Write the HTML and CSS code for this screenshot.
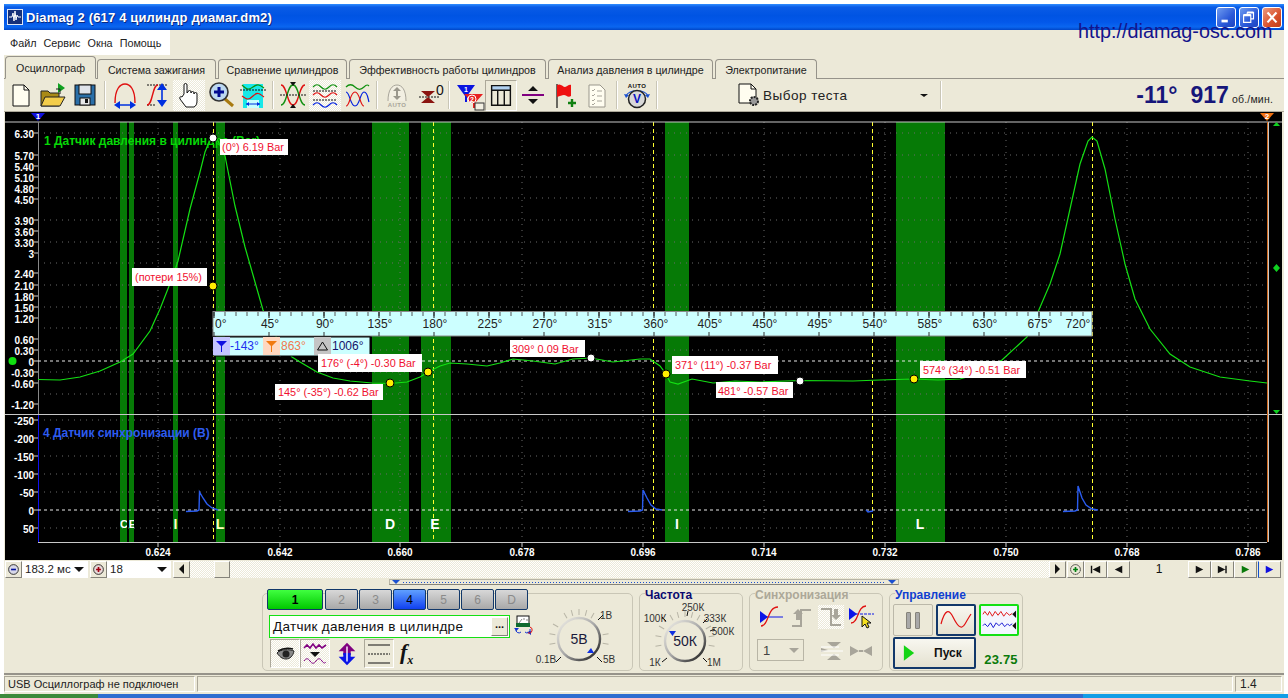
FILE: index.html
```html
<!DOCTYPE html>
<html lang="ru">
<head>
<meta charset="utf-8">
<title>Diamag 2</title>
<link rel="stylesheet" href="styles.css">
</head>
<body>
<div class="window">
  <header class="titlebar">
    <svg class="app-icon" viewBox="0 0 16 16"><rect width="16" height="16" fill="#16307a"/><rect x=".5" y=".5" width="15" height="15" fill="none" stroke="#dfe6f5"/><path d="M2 8h3l1-4 1 8 1-10 1 9 1-5 1 2h3" fill="none" stroke="#fff"/></svg>
    <span class="title-text">Diamag 2 (617 4 цилиндр диамаг.dm2)</span>
    <div class="winbtns">
      <span class="winbtn"><svg viewBox="0 0 20 21"><rect x="5" y="13" width="7" height="3" fill="#fff"/></svg></span>
      <span class="winbtn"><svg viewBox="0 0 20 21"><path d="M8 5h7v7h-3M8 5v2M4 8h8v8H4z" fill="none" stroke="#fff" stroke-width="1.3"/><path d="M4 8h8M8 5h7" stroke="#fff" stroke-width="2.4"/></svg></span>
      <span class="winbtn winbtn-close"><svg viewBox="0 0 20 21"><path d="M5 5l10 11M15 5L5 16" stroke="#fff" stroke-width="2.4"/></svg></span>
    </div>
  </header>
  <a class="url">http://diamag-osc.com</a>
  <nav class="menubar"><span>Файл</span><span>Сервис</span><span>Окна</span><span>Помощь</span></nav>
  <div class="tabs">
    <span class="tab tab-active w-osc">Осциллограф</span>
    <span class="tab w-ign">Система зажигания</span>
    <span class="tab w-cmp">Сравнение цилиндров</span>
    <span class="tab w-eff">Эффективность работы цилиндров</span>
    <span class="tab w-ana">Анализ давления в цилиндре</span>
    <span class="tab w-pow">Электропитание</span>
  </div>
  <div class="toolbar">
    <span class="tb"><svg viewBox="0 0 32 32"><path d="M8 6h11l5 5v16H8z" fill="#fffdf0" stroke="#111"/><path d="M19 6v5h5" fill="none" stroke="#111"/></svg></span>
    <span class="tb"><svg viewBox="0 0 32 32"><path d="M21 4l7 5-7 5z" fill="#10a020"/><path d="M19 10h4v5" fill="none" stroke="#222"/><path d="M4 12h7l2 2h9v13H4z" fill="#a98a16" stroke="#222"/><path d="M4 27l4-9h20l-5 9z" fill="#f3cd4a" stroke="#222"/></svg></span>
    <span class="tb"><svg viewBox="0 0 32 32"><rect x="6" y="6" width="20" height="20" fill="#2a6fa8" stroke="#111"/><rect x="10" y="6" width="12" height="9" fill="#dfe3ea" stroke="#111"/><rect x="11" y="19" width="10" height="7" fill="#e7e7e7" stroke="#111"/><rect x="16" y="20" width="3" height="4" fill="#111"/></svg></span>
    <span class="sep"></span>
    <span class="tb"><svg viewBox="0 0 32 32"><path d="M6 24C6 10 11 5 16 5s10 5 10 19" fill="none" stroke="#e01010" stroke-width="1.4"/><path d="M9 26h14" stroke="#0030e0" stroke-width="1.5"/><path d="M5 26l6-4v8zM27 26l-6-4v8z" fill="#0030e0"/></svg></span>
    <span class="tb"><svg viewBox="0 0 32 32"><path d="M6 6h20M6 26h8" stroke="#111" stroke-dasharray="2 1"/><path d="M6 26c6 0 5-20 11-20" fill="none" stroke="#e01010" stroke-width="1.4"/><path d="M21 10v14" stroke="#0030e0" stroke-width="1.6"/><path d="M21 4l5 7H16zM21 28l5-7H16z" fill="#0030e0"/></svg></span>
    <span class="tb tb-on"><svg viewBox="0 0 32 32"><path d="M11 15V6a1.500 1.500 0 0 1 3 0v8l1-1a1.500 1.500 0 0 1 3 0v1a1.500 1.500 0 0 1 3 0v1a1.500 1.500 0 0 1 3 0v7c0 3-1 5-3 6h-8l-6-8c-1-2 1-3 2-2z" fill="#fff" stroke="#111"/></svg></span>
    <span class="tb"><svg viewBox="0 0 32 32"><path d="M20 20l8 7" stroke="#a87a10" stroke-width="3"/><circle cx="14" cy="13" r="9" fill="#bcd8f0" stroke="#333" stroke-width="1.6"/><path d="M9 13h10M14 8v10" stroke="#000a90" stroke-width="3"/></svg></span>
    <span class="tb"><svg viewBox="0 0 32 32"><path d="M6 5h20v24H6z" fill="#18e8e8"/><rect x="10" y="21" width="12" height="8" fill="#c8ffff"/><path d="M5 6c5 5 7 5 11 2s6-3 11 1" fill="none" stroke="#109010" stroke-width="1.2"/><path d="M5 17c5 4 7 4 11 0s6-3 11 1" fill="none" stroke="#e01010" stroke-width="1.2"/><path d="M3 11h26" stroke="#111" stroke-dasharray="2 1"/><path d="M9 25h14" stroke="#0030e0"/><path d="M9 25l3-2v4zM23 25l-3-2v4z" fill="#0030e0"/></svg></span>
    <span class="sep"></span>
    <span class="tb"><svg viewBox="0 0 32 32"><path d="M4 6c6 0 6 20 12 20s6-20 12-20" fill="none" stroke="#e01010" stroke-width="1.3"/><path d="M4 26c6 0 6-20 12-20s6 20 12 20" fill="none" stroke="#109010" stroke-width="1.3"/><path d="M3 16h26" stroke="#111" stroke-dasharray="2 1"/><path d="M13 3h6l-3 4zM13 29h6l-3-4z" fill="#111"/></svg></span>
    <span class="tb tb-on"><svg viewBox="0 0 32 32"><path d="M4 8c3-3 5-3 8 0s5 3 8 0 5-3 8 0" fill="none" stroke="#109010" stroke-width="1.2"/><path d="M4 16c3-3 5-3 8 0s5 3 8 0 5-3 8 0" fill="none" stroke="#e01010" stroke-width="1.2"/><path d="M4 26c3-3 5-3 8 0s5 3 8 0 5-3 8 0" fill="none" stroke="#0020e0" stroke-width="1.2"/><path d="M4 12h24M4 21h24" stroke="#111" stroke-dasharray="2 1"/></svg></span>
    <span class="tb"><svg viewBox="0 0 32 32"><path d="M5 8c3-3 6-3 9 0s6 3 9 0 4-2 5-1" fill="none" stroke="#109010" stroke-width="1.2"/><path d="M5 13c4 0 4 14 9 14s5-14 9-14 4 8 5 10" fill="none" stroke="#0020e0" stroke-width="1.2"/><path d="M5 27c4 0 4-14 9-14s5 14 9 14" fill="none" stroke="#e01010" stroke-width="1.2"/></svg></span>
    <span class="sep"></span>
    <span class="tb"><svg viewBox="0 0 32 32"><path d="M7 22C7 11 11 6 16 6s9 5 9 16" fill="#f2efe2" stroke="#a8a59a"/><path d="M16 10v9" stroke="#9a978c" stroke-width="2"/><path d="M12 12l4-4 4 4zM12 17l4 4 4-4z" fill="#9a978c"/><text class="auto-dis" x="16" y="28">AUTO</text></svg></span>
    <span class="tb"><svg viewBox="0 0 32 32"><path d="M8 12h14l-7 6zM8 24h14l-7-6z" fill="#8a1410"/><text class="zero-tx" x="23" y="16">0</text><path d="M6 18h20" stroke="#111" stroke-dasharray="2 1"/></svg></span>
    <span class="sep"></span>
    <span class="tb"><svg viewBox="0 0 32 32"><path d="M4 6h18l-8 11v6h-2V17z" fill="#0a14e0"/><text class="flt" x="13" y="13">1</text><path d="M11 15h19l-8 9v5h-2v-5z" fill="#e82020"/><circle cx="19" cy="20" r="4" fill="#e82020" stroke="#fff"/><text class="flt" x="19" y="23">2</text><rect x="22" y="24" width="9" height="7" fill="#f2efe2" stroke="#333"/></svg></span>
    <span class="tb tb-on tb-tab"><svg viewBox="0 0 32 32"><rect x="6" y="6" width="20" height="5" fill="#b0d0f0"/><path d="M6 6h20v21H6zM6 11h20M12.500 11v16M19.500 11v16" fill="none" stroke="#111" stroke-width="1.5"/></svg></span>
    <span class="tb"><svg viewBox="0 0 32 32"><path d="M5 16h22" stroke="#800080" stroke-width="2"/><path d="M16 7l5 5H11zM16 25l5-5H11z" fill="#111"/></svg></span>
    <span class="tb"><svg viewBox="0 0 32 32"><path d="M8 5v24" stroke="#111" stroke-width="1.2"/><path d="M8 6c4-2 6 2 8 2s4-3 6-2v11c-3 2-5-1-7-1s-4 1-7 2z" fill="#ef1010"/><path d="M19 24h8M23 20v8" stroke="#108010" stroke-width="2.4"/></svg></span>
    <span class="tb"><svg viewBox="0 0 32 32"><path d="M8 6h11l5 5v17H8z" fill="#fffdf0" stroke="#9a978c"/><path d="M11 11l1 1 2-2M11 16l1 1 2-2M11 21l1 1 2-2M11 25l1 1 2-2M16 12h5M16 17h5M16 22h5" fill="none" stroke="#a8a59a"/></svg></span>
    <span class="sep"></span>
    <span class="tb"><svg viewBox="0 0 32 32"><text class="auto-on" x="16" y="9">AUTO</text><path d="M5 17c3-7 19-7 22 0" fill="none" stroke="#1a50d0" stroke-width="1.2"/><path d="M3 15l5 1-3 3zM29 15l-5 1 3 3z" fill="#1a50d0"/><circle cx="16" cy="20" r="8.500" fill="#d8d8d8" stroke="#222" stroke-width="1.5"/><text class="v-tx" x="16" y="24">V</text></svg></span>
    <span class="sep"></span>
    <div class="test-select">
      <svg class="test-icon" viewBox="0 0 24 24"><path d="M2 1h12l5 5v14H2z" fill="#fffdf0" stroke="#111"/><path d="M14 1v5h5" fill="none" stroke="#111"/><circle cx="17" cy="18" r="4" fill="#999" stroke="#222" stroke-width="2" stroke-dasharray="2 1"/></svg>
      <span class="test-text">Выбор теста</span>
      <i class="arrow arrow-small"></i>
    </div>
    <span class="sep"></span>
    <div class="rpm"><b class="rpm-big">-11°</b><b class="rpm-big rpm-val">917</b><span class="rpm-unit">об./мин.</span></div>
  </div>

  <svg class="chart" viewBox="5 113 1277 448">
    <defs>
      <clipPath id="b1"><rect x="120" y="500" width="7" height="40"/></clipPath>
      <clipPath id="b2"><rect x="129" y="500" width="5" height="40"/></clipPath>
    </defs>
    <rect x="5" y="113" width="1277" height="448" fill="#000"/>
    <g class="bands">
      <rect x="120" y="123" width="7" height="420"/><rect x="129" y="123" width="5" height="420"/>
      <rect x="173" y="123" width="5" height="420"/><rect x="216" y="123" width="9" height="420"/>
      <rect x="372" y="123" width="37" height="420"/><rect x="421" y="123" width="30" height="420"/>
      <rect x="665" y="123" width="24" height="420"/><rect x="896" y="123" width="49" height="420"/>
    </g>
    <path class="grid" d="M38 134H1267M38 156H1267M38 178H1267M38 199H1267M38 221H1267M38 243H1267M38 264H1267M38 286H1267M38 308H1267M38 329H1267M38 351H1267M38 373H1267M38 395H1267M38 421H1267M38 439H1267M38 457H1267M38 475H1267M38 493H1267M38 529H1267M158 123V543M280 123V543M400 123V543M522 123V543M643 123V543M764 123V543M885 123V543M1006 123V543M1127 123V543M1248 123V543"/>
    <path class="cursor" d="M213.500 123V543M433.500 123V543M653.500 123V543M872.500 123V543M1092.500 123V543"/>
    <path class="frame" d="M5 123H1282M5 415.500H1282M38 543.500H1267M1268.500 123V543"/>
    <path class="axis-up" d="M38.500 123V415"/>
    <path class="axis-lo" d="M38.500 416V543"/>
    <path class="axis-end" d="M1267.500 123V543"/>
    <path class="ticks" d="M34 134h4M34 156h4M34 167h4M34 178h4M34 189h4M34 200h4M34 221h4M34 232h4M34 243h4M34 254h4M34 274h4M34 286h4M34 297h4M34 308h4M34 319h4M34 340h4M34 351h4M34 362h4M34 373h4M34 384h4M34 405h4M34 421h4M34 439h4M34 457h4M34 475h4M34 493h4M34 511h4M34 529h4M158 544v4M280 544v4M400 544v4M522 544v4M643 544v4M764 544v4M885 544v4M1006 544v4M1127 544v4M1248 544v4"/>
    <path class="zero" d="M38 362H1267M38 511H1267"/>
    <path class="wave-blue" d="M186 512.500L197 512L199 511L199.500 493L203 499L207 505L212 509L218 511M628 512.500L640 512L642.500 511L643 491L647 499L651 506L656 510L662 511M866 511L868 513L873 512M1063 512.500L1075 512L1077.500 511L1078 487L1082 499L1086 506L1092 510L1098 511"/>
    <path class="wave-green" d="M38 380.500L60 381L80 378L100 372L120 363L133 355L150 332L160 310L173 277L178 262L190 210L200 173L205 153L210 141L213 139L218 142L225 157L235 207L245 248L255 283L263 311L275 336L292 358L300 363L317 373L333 379L350 382L372 384L390 384.500L407 383L420 378L428 373L440 367L450 364L467 365L487 367L500 364L513 360L533 362L555 365L573 360L591 359L613 363L640 360L650 360L660 367L666 375L670 383L678 385L692 380L713 384L735 382L760 383L800 381.500L853 382L880 381L913 380L938 381L960 380L985 373L1002 361L1027 338L1041 306L1050 285L1060 255L1070 210L1080 165L1088 142L1092 138L1097 142L1105 170L1115 220L1125 265L1135 300L1150 330L1170 355L1190 368L1220 378L1250 382L1267 384"/>
    <g class="ylab">
      <text x="34" y="138">6.30</text><text x="34" y="160">5.70</text><text x="34" y="171">5.40</text><text x="34" y="182">5.10</text><text x="34" y="193">4.80</text><text x="34" y="204">4.50</text>
      <text x="34" y="225">3.90</text><text x="34" y="236">3.60</text><text x="34" y="247">3.30</text><text x="34" y="258">3</text>
      <text x="34" y="278">2.40</text><text x="34" y="290">2.10</text><text x="34" y="301">1.80</text><text x="34" y="312">1.50</text><text x="34" y="323">1.20</text>
      <text x="34" y="344">0.60</text><text x="34" y="355">0.30</text><text x="34" y="366">0</text><text x="34" y="377">-0.30</text><text x="34" y="388">-0.60</text><text x="34" y="409">-1.20</text>
      <text x="34" y="425">-250</text><text x="34" y="443">-200</text><text x="34" y="461">-150</text><text x="34" y="479">-100</text><text x="34" y="497">-50</text><text x="34" y="515">0</text><text x="34" y="533">50</text>
    </g>
    <g class="xlab">
      <text x="158" y="557">0.624</text><text x="280" y="557">0.642</text><text x="400" y="557">0.660</text><text x="522" y="557">0.678</text><text x="643" y="557">0.696</text><text x="764" y="557">0.714</text><text x="885" y="557">0.732</text><text x="1006" y="557">0.750</text><text x="1127" y="557">0.768</text><text x="1248" y="557">0.786</text>
    </g>
    <text class="ch-green" x="44" y="146">1 Датчик давления в цилиндре (Bar)</text>
    <text class="ch-blue" x="43" y="438">4 Датчик синхронизации (В)</text>
    <g class="phase">
      <text class="phase-xs" clip-path="url(#b1)" x="124" y="529">C</text><text class="phase-xs" clip-path="url(#b2)" x="132.500" y="529">E</text>
      <text class="phase-sm" x="175.500" y="530">I</text><text class="phase-sm" x="220" y="530">L</text>
      <text x="390" y="530">D</text><text x="435" y="530">E</text><text x="677" y="530">I</text><text x="920" y="530">L</text>
    </g>
    <path class="mark-blue" d="M31 114h14l-7 8z"/><text class="mark-tx" x="38" y="120">1</text>
    <path class="mark-or" d="M1260 114h14l-7 8z"/><text class="mark-tx" x="1267" y="120">2</text>
    <path class="mark-g" d="M1273 127h7l-3.500 -4zM1276.500 265l3.500 4-3.500 4-3.500-4zM1273 411h7l-3.500 4z"/>
    <circle class="mark-c" cx="12.500" cy="362" r="4"/>

    <rect class="ruler" x="213" y="312.500" width="879" height="24.500"/>
    <path class="r-t" d="M213.500 315H1092"/>
    <path class="r-m" d="M213.500 316H1092"/>
    <path class="r-b" d="M213.500 335H1092"/>
    <g class="r-lab">
      <text class="r-first" x="215" y="329">0°</text><text x="270" y="329">45°</text><text x="325" y="329">90°</text><text x="380" y="329">135°</text><text x="435" y="329">180°</text><text x="490" y="329">225°</text><text x="545" y="329">270°</text><text x="600" y="329">315°</text><text x="656" y="329">360°</text><text x="710" y="329">405°</text><text x="765" y="329">450°</text><text x="820" y="329">495°</text><text x="875" y="329">540°</text><text x="930" y="329">585°</text><text x="985" y="329">630°</text><text x="1040" y="329">675°</text><text x="1078" y="329">720°</text>
    </g>
    <rect class="lg-bg" x="213" y="338" width="157" height="19"/>
    <rect class="lg-c1" x="213" y="338" width="17" height="18"/><rect class="lg-c2" x="263" y="338" width="17" height="18"/><rect class="lg-c3" x="314" y="338" width="17" height="18"/>
    <path class="lg-blue" d="M216 342h11l-5 5v6h-1v-6z"/><path class="lg-or" d="M266 342h11l-5 5v6h-1v-6z"/><path class="lg-tri" d="M322.500 343l5 8h-10z"/>
    <text class="lg-t1" x="230" y="351">-143°</text><text class="lg-t2" x="281" y="351">863°</text><text class="lg-t3" x="332" y="351">1006°</text>

    <g class="lbl">
      <rect x="220" y="140" width="68" height="16"/><text x="222" y="152">(0°) 6.19 Bar</text>
      <rect x="132" y="269" width="75" height="18"/><text x="135" y="282">(потери 15%)</text>
      <rect x="275" y="385" width="108" height="16"/><text x="278" y="397">145° (-35°) -0.62 Bar</text>
      <rect x="318" y="355" width="104" height="18"/><text x="321" y="368">176° (-4°) -0.30 Bar</text>
      <rect x="510" y="341" width="75" height="17"/><text x="512" y="354">309° 0.09 Bar</text>
      <rect x="672" y="357" width="106" height="18"/><text x="675" y="370">371° (11°) -0.37 Bar</text>
      <rect x="716" y="383" width="77" height="16"/><text x="718" y="396">481° -0.57 Bar</text>
      <rect x="920" y="362" width="106" height="17"/><text x="923" y="375">574° (34°) -0.51 Bar</text>
    </g>
    <g class="dot-w"><circle cx="213" cy="139" r="4"/><circle cx="591" cy="359" r="4"/><circle cx="800" cy="382" r="4"/></g>
    <g class="dot-y"><circle cx="213" cy="287" r="4"/><circle cx="390" cy="384" r="4"/><circle cx="428" cy="373" r="4"/><circle cx="666" cy="375" r="4"/><circle cx="914" cy="380" r="4"/></g>
  </svg>

  <div class="navrow">
    <span class="sb w-17"><svg viewBox="0 0 16 16"><circle cx="8" cy="8" r="6" fill="#d8d8e8" stroke="#111"/><path d="M5 8h6" stroke="#0010a0" stroke-width="2"/></svg></span>
    <span class="combo w-66"><span class="combo-tx">183.2 мс</span><i class="arrow"></i></span>
    <span class="sb w-17 ml2"><svg viewBox="0 0 16 16"><circle cx="8" cy="8" r="6" fill="#e8d8d8" stroke="#111"/><path d="M5 8h6M8 5v6" stroke="#a00010" stroke-width="2"/></svg></span>
    <span class="combo w-64"><span class="combo-tx">18</span><i class="arrow"></i></span>
    <span class="sb w-17 ml2"><i class="tri-l"></i></span>
    <div class="track"><span class="thumb"></span></div>
    <span class="sb w-17"><i class="tri-r"></i></span>
    <span class="sb w-17 ml1"><svg viewBox="0 0 16 16"><circle cx="8" cy="8" r="6" fill="none" stroke="#111" stroke-dasharray="2 .6"/><path d="M5 8h6M8 5v6" stroke="#008010" stroke-width="2"/></svg></span>
    <span class="sb w-23"><svg viewBox="0 0 16 12"><path d="M3 2h1.500v8H3zM13 2v8L5 6z" fill="#111"/></svg></span>
    <span class="sb w-23"><svg viewBox="0 0 16 12"><path d="M12 2v8L4 6z" fill="#111"/></svg></span>
    <span class="nav-num">1</span>
    <span class="sb w-23"><svg viewBox="0 0 16 12"><path d="M4 2v8l8-4z" fill="#111"/></svg></span>
    <span class="sb w-23"><svg viewBox="0 0 16 12"><path d="M3 2v8l8-4zM11 2h1.500v8H11z" fill="#111"/></svg></span>
    <span class="sb w-23"><svg viewBox="0 0 16 12"><path d="M4 2v8l8-4z" fill="#0a7a0a"/></svg></span>
    <span class="sb w-23 ml1 sb-blue"><svg viewBox="0 0 16 12"><path d="M4 2v8l8-4z" fill="#1010e0"/></svg></span>
  </div>

  <div class="controls">
    <div class="splitter"><i class="spl-tri"></i><span class="spl-dots"></span><i class="spl-tri"></i></div>
    <div class="groups">
      <section class="group g-chan">
        <div class="chan-left">
          <div class="chbtns">
            <span class="ch ch-1">1</span><span class="ch">2</span><span class="ch">3</span><span class="ch ch-4">4</span><span class="ch">5</span><span class="ch">6</span><span class="ch">D</span>
          </div>
          <div class="sensor-row">
            <div class="sensor"><span class="sensor-tx">Датчик давления в цилиндре</span><span class="sensor-btn">...</span></div>
            <svg class="sensor-ic" viewBox="0 0 20 20"><rect x="4" y="1" width="12" height="10" fill="#fff" stroke="#111"/><path d="M6 8l3-4M11 3v2M14 4v2" stroke="#888"/><rect x="3" y="8" width="14" height="4" fill="#106a30"/><path d="M3 14a3 3 0 0 0 5 3M17 14a3 3 0 0 1-5 3" fill="none" stroke="#1030d0"/><path d="M1 13h5l-2.500 3zM14 17l4-1v4z" fill="#1030d0"/><path d="M17 12a3 3 0 0 1-2 6" fill="none" stroke="#e01010"/></svg>
          </div>
          <div class="chan-tools">
            <span class="ct ct-on"><svg viewBox="0 0 28 28"><path d="M6 13c3-4 13-4 17-2-1 5-4 8-8 8s-7-3-9-6z" fill="#8a8a8a" stroke="#222"/><circle cx="15" cy="14" r="3.500" fill="#222"/><path d="M7 11c5-3 11-3 15-2" stroke="#111" stroke-width="1.500" fill="none"/></svg></span>
            <span class="ct ct-on"><svg viewBox="0 0 28 28"><path d="M3 8l3-3 3 3 3-4 3 4 3-3 3 3 4-3" fill="none" stroke="#800080" stroke-width="1.600"/><path d="M9 12h10l-5 5z" fill="#111"/><path d="M3 21c2-3 4-3 6 0s4 3 6 0 4-3 6 0 3 2 4 1" fill="none" stroke="#800080"/></svg></span>
            <span class="ct ct-plain"><svg viewBox="0 0 28 28"><path d="M5 11l9-9 9 9h-5v4h-8v-4z" fill="#800080"/><path d="M5 17l9 9 9-9h-5v-4h-8v4z" fill="#0a14e8"/><path d="M14 6v16" stroke="#fff" stroke-width="1.500"/></svg></span>
            <span class="ct ct-on ct-lines"><svg viewBox="0 0 28 28"><path d="M3 5h22M3 23h22" stroke="#111" stroke-width="1.200"/><path d="M3 14h22" stroke="#111" stroke-dasharray="2 1"/></svg></span>
            <span class="fx"><i>f</i><sub>x</sub></span>
          </div>
        </div>
        <svg class="knob knob-v" viewBox="535 605 96 66">
          <defs><linearGradient id="kg" x1="0" y1="0" x2="1" y2="1"><stop offset="0" stop-color="#f4f2ea"/><stop offset=".5" stop-color="#a8a8a8"/><stop offset="1" stop-color="#111"/></linearGradient></defs>
          <line id="kt" class="kt" x1="580" y1="616" x2="580" y2="610"/>
          <use href="#kt" transform="rotate(-30 580 640)"/><use href="#kt" transform="rotate(-15 580 640)"/><use href="#kt" transform="rotate(15 580 640)"/><use href="#kt" transform="rotate(30 580 640)"/><use href="#kt" transform="rotate(-60 580 640)"/><use href="#kt" transform="rotate(-80 580 640)"/><use href="#kt" transform="rotate(-100 580 640)"/><use href="#kt" transform="rotate(80 580 640)"/><use href="#kt" transform="rotate(100 580 640)"/>
          <path class="kb" d="M599 621l5-5M562 658l-5 5M598 658l5 5"/>
          <circle class="kr" cx="580" cy="640" r="21"/>
          <path class="kmark" d="M592 649l3 5h-7z"/>
          <text class="kc" x="580" y="645">5В</text>
          <text class="kl" x="607" y="620">1В</text><text class="kl" x="547" y="664">0.1В</text><text class="kl" x="610" y="664">5В</text>
        </svg>
      </section>
      <section class="group g-freq">
        <h3 class="gt gt-navy">Частота</h3>
        <svg class="knob knob-f" viewBox="640 600 102 71">
          <line id="ft" class="kt" x1="685" y1="618" x2="685" y2="612"/>
          <use href="#ft" transform="rotate(-30 685 642)"/><use href="#ft" transform="rotate(-15 685 642)"/><use href="#ft" transform="rotate(15 685 642)"/><use href="#ft" transform="rotate(30 685 642)"/><use href="#ft" transform="rotate(-60 685 642)"/><use href="#ft" transform="rotate(-80 685 642)"/><use href="#ft" transform="rotate(-100 685 642)"/><use href="#ft" transform="rotate(60 685 642)"/><use href="#ft" transform="rotate(80 685 642)"/><use href="#ft" transform="rotate(100 685 642)"/>
          <path class="kb" d="M666 622l-4-4M687 617l1-5M703 624l4-4M710 632l5-2M667 659l-5 4M703 659l4 4"/>
          <circle class="kr" cx="685" cy="642" r="20"/>
          <path class="kmark" d="M669 632h7l-3.500 5z"/>
          <text class="kc" x="685" y="647">50К</text>
          <text class="kl" x="655" y="623">100К</text><text class="kl" x="693" y="612">250К</text><text class="kl" x="715" y="623">333К</text><text class="kl" x="723" y="636">500К</text><text class="kl" x="655" y="667">1К</text><text class="kl" x="714" y="667">1М</text>
        </svg>
      </section>
      <section class="group g-sync">
        <h3 class="gt gt-gray">Синхронизация</h3>
        <div class="sync-grid">
          <span class="sy"><svg viewBox="0 0 26 24"><path d="M2 6l8 6-8 6z" fill="#0a14e8"/><path d="M8 12h17" stroke="#0a14e8"/><path d="M3 21c8 0 6-19 17-19" fill="none" stroke="#e01010" stroke-width="1.300"/></svg></span>
          <span class="sy"><svg viewBox="0 0 26 24"><path d="M4 21h9V5h10" fill="none" stroke="#a8a59a" stroke-width="2"/><path d="M8 15V9H5l5-5 5 5h-3v6z" fill="#a8a59a"/></svg></span>
          <span class="sy sy-on"><svg viewBox="0 0 26 24"><path d="M3 4h10v16h10" fill="none" stroke="#a8a59a" stroke-width="2"/><path d="M16 4v6h-3l5 5 5-5h-3V4z" fill="#a8a59a"/></svg></span>
          <span class="sy"><svg viewBox="0 0 26 24"><path d="M1 3l8 6-8 6z" fill="#0a14e8"/><path d="M8 9h18" stroke="#0a14e8" stroke-dasharray="3 1"/><path d="M3 18c8 0 6-17 15-17" fill="none" stroke="#e01010" stroke-width="1.300"/><path d="M14 11l0 11 3-3 2 4 2-1-2-4h4z" fill="#f4e020" stroke="#111"/></svg></span>
          <span class="combo-dis"><span>1</span><i class="arrow arrow-dis"></i></span>
          <span class="sy sy-a"><svg viewBox="0 0 26 24"><path d="M3 4l0 5 7 2-7 2v5zM23 3H9l7 6zM23 21H9l7-6z" fill="#a8a59a"/><path d="M3 12h22M3 8h18M3 16h18" stroke="#fff"/></svg></span>
          <span class="sy sy-a"><svg viewBox="0 0 26 24"><path d="M2 7l9 5-9 5zM24 7l-9 5 9 5z" fill="#a8a59a"/><path d="M11 12h4" stroke="#a8a59a" stroke-width="2"/></svg></span>
        </div>
      </section>
      <section class="group g-ctrl">
        <h3 class="gt gt-blue">Управление</h3>
        <div class="ctrl-grid">
          <span class="cb cb-pause"><i class="pz"></i><i class="pz"></i></span>
          <span class="cb cb-navy"><svg viewBox="0 0 36 26"><path d="M3 17C7 2 11 2 15 10s8 14 12 7 4-7 6-10" fill="none" stroke="#e01010" stroke-width="1.200"/></svg></span>
          <span class="cb cb-green"><svg viewBox="0 0 38 28"><path d="M2 8l2-3 3 4 2-4 3 5 3-5 3 4 3-4 3 5 3-4 3 3 3-2" fill="none" stroke="#e01010"/><path d="M2 20l2-2 3 3 3-4 3 5 3-5 3 3 3-3 3 4 3-3 2 2 3-2" fill="none" stroke="#1010d0"/><path d="M37 4v8l-4-4zM37 16v8l-4-4z" fill="#111"/></svg></span>
          <span class="cb cb-navy cb-start"><svg class="play" viewBox="0 0 14 20"><path d="M1 1l12 9L1 19z" fill="#14d414"/></svg><b>Пуск</b></span>
          <b class="fps">23.75</b>
        </div>
      </section>
    </div>
  </div>

  <footer class="statusbar">
    <span class="st st-main">USB Осциллограф не подключен</span>
    <span class="st st-mid"></span>
    <span class="st st-ver">1.4</span>
  </footer>
</div>
<div class="taskbar"><span class="tk-start"></span><span class="tk-mid"></span><span class="tk-tray"></span></div>
</body>
</html>
```
FILE: styles.css
```css
* { box-sizing: border-box; }
html, body { margin: 0; height: 698px; overflow: hidden; background: #fff; }
body { font-family: "Liberation Sans", Arial, sans-serif; font-size: 11px; color: #111; }
svg { display: block; }

.window { position: relative; margin: 4px 4px 0; width: 1280px; height: 690px; background: #ece9d8; display: flex; flex-direction: column; }

.titlebar { height: 26px; display: flex; align-items: center; padding: 0 2px 0 3px; background: linear-gradient(#2f8dff 0, #0a5be6 12%, #0054e3 45%, #0358ea 70%, #0a66f0 88%, #0046c8 100%); }
.app-icon { width: 16px; height: 16px; }
.title-text { margin-left: 3px; color: #fff; font-size: 13px; font-weight: 700; letter-spacing: .15px; white-space: nowrap; text-shadow: 1px 1px #0a2a80; }
.winbtns { margin-left: auto; display: flex; gap: 3px; }
.winbtn { width: 20px; height: 21px; border: 1px solid #fff; border-radius: 3px; background: linear-gradient(135deg, #6f9cf0, #2a58d8 60%, #1d45c0); }
.winbtn-close { background: linear-gradient(135deg, #ec9a80, #d8512c 60%, #c03c18); }

.url { position: absolute; left: 1074px; top: 16px; font-size: 19.8px; color: #14148c; white-space: nowrap; }

.menubar { height: 25px; width: 166px; background: #fff; display: flex; align-items: center; gap: 7px; padding: 0 0 0 6px; font-size: 10.8px; color: #222; }

.tabs { height: 24px; display: flex; align-items: flex-end; padding-left: 1px; position: relative; z-index: 1; margin-bottom: -1px; }
.tab { height: 20px; margin-right: 2px; border: 1px solid #96938a; border-bottom: 0; border-radius: 4px 4px 0 0; display: flex; align-items: center; justify-content: center; font-size: 10.7px; white-space: nowrap; background: #ece9d8; color: #222; }
.tab-active { height: 23px; margin-right: 1px; background: #ece9d8; border-bottom: 1px solid #ece9d8; }
.w-osc { width: 91px; } .w-ign { width: 119px; } .w-cmp { width: 129px; } .w-eff { width: 197px; } .w-ana { width: 165px; } .w-pow { width: 102px; }

.toolbar { height: 34px; display: flex; align-items: center; padding-left: 1px; border-top: 1px solid #96938a; border-bottom: 1px solid #aca899; }
.tb { width: 32px; height: 31px; display: flex; align-items: center; justify-content: center; }
.tb svg { width: 32px; height: 32px; }
.tb-on { background: repeating-conic-gradient(#fff 0 25%, #ece9d8 0 50%) 0 0 / 2px 2px; }
.tb-tab { background: #ece9d8; border: 1px solid #fff; border-left-color: #aca899; border-top-color: #aca899; }
.sep { width: 8px; height: 28px; position: relative; flex: none; }
.sep::after { content: ""; position: absolute; left: 3px; top: 0; bottom: 0; width: 2px; background: linear-gradient(90deg, #c9c6b6 50%, #fff 50%); }
.auto-dis { font-size: 6px; font-weight: 700; fill: #a8a59a; text-anchor: middle; letter-spacing: .4px; }
.auto-on { font-size: 6px; font-weight: 700; fill: #111; text-anchor: middle; letter-spacing: .4px; }
.v-tx { font-size: 12px; fill: #0a14c0; text-anchor: middle; font-weight: 700; }
.zero-tx { font-size: 14px; fill: #111; }
.flt { font-size: 7px; font-weight: 700; fill: #fff; text-anchor: middle; }

.test-select { width: 276px; display: flex; align-items: center; padding-left: 76px; }
.test-icon { width: 24px; height: 24px; }
.test-text { margin-left: 2px; font-size: 13.5px; letter-spacing: .5px; color: #222; }
.arrow { display: block; width: 0; height: 0; margin-left: auto; margin-right: 4px; border: 5px solid transparent; border-top-color: #111; border-bottom: 0; flex: none; }
.arrow-small { border-width: 3px 4px 0; margin-right: 9px; }
.arrow-dis { border-top-color: #a8a59a; }

.rpm { flex: 1; display: flex; align-items: baseline; justify-content: flex-end; padding-right: 11px; color: #16167a; }
.rpm-big { font-size: 23px; color: #16167a; }
.rpm-val { margin-left: 13px; }
.rpm-unit { margin-left: 3px; font-size: 10.5px; color: #222; letter-spacing: .2px; }

.chart { margin-left: 1px; width: 1277px; height: 448px; flex: none; }
.bands rect { fill: #067a06; }
.grid { stroke: #6a6a6a; stroke-width: 1; stroke-dasharray: 1 5; fill: none; }
.cursor { stroke: #ffff30; stroke-width: 1; stroke-dasharray: 4 3; fill: none; }
.frame { stroke: #c8c8c8; stroke-width: 1; fill: none; }
.axis-up { stroke: #888; }
.axis-lo { stroke: #1010f0; }
.axis-end { stroke: #d06a20; }
.ticks { stroke: #d0d0d0; fill: none; }
.zero { stroke: #e8e8e8; stroke-dasharray: 3 3; fill: none; }
.wave-green { fill: none; stroke: #14e014; stroke-width: 1.2; }
.wave-blue { fill: none; stroke: #2a5cf0; stroke-width: 1.4; }
.ylab { transform: translateY(1px); }
.ylab text { font-size: 10px; font-weight: 700; fill: #fff; text-anchor: end; }
.xlab text { font-size: 10px; font-weight: 700; fill: #fff; text-anchor: middle; }
.ch-green { font-size: 12px; font-weight: 700; fill: #06d806; }
.ch-blue { font-size: 12px; font-weight: 700; fill: #2e5cf0; }
.phase text { font-size: 14px; font-weight: 700; fill: #fff; text-anchor: middle; }
.phase .phase-sm { fill: #ffffc0; }
.phase .phase-xs { font-size: 11px; }
.mark-blue { fill: #1010e0; }
.mark-or { fill: #f07010; }
.mark-tx { font-size: 8px; font-weight: 700; fill: #fff; text-anchor: middle; }
.mark-g { fill: #10d020; }
.mark-c { fill: #10e010; }
.ruler { fill: #ccffff; stroke: #8a8a8a; }
.r-t { stroke: #555; stroke-width: 4; stroke-dasharray: 1 10; fill: none; }
.r-m { stroke: #111; stroke-width: 6; stroke-dasharray: 1 54; fill: none; }
.r-b { stroke: #333; stroke-width: 4; stroke-dasharray: 1 54; fill: none; }
.r-lab text { font-size: 12px; fill: #222; text-anchor: middle; }
.r-lab .r-first { text-anchor: start; }
.lg-bg { fill: #ccffff; stroke: #000; }
.lg-c1 { fill: #c4c4ff; } .lg-c2 { fill: #ffd8c0; } .lg-c3 { fill: #c4c4c4; }
.lg-blue { fill: #1010e0; } .lg-or { fill: #f07a10; }
.lg-tri { fill: none; stroke: #111; }
.lg-t1, .lg-t2, .lg-t3 { font-size: 12px; }
.lg-t1 { fill: #2030f0; } .lg-t2 { fill: #f07a50; } .lg-t3 { fill: #14146a; }
.lbl rect { fill: #fff; }
.lbl text { font-size: 10.9px; fill: #f01030; }
.dot-w circle { fill: #fff; stroke: #000; }
.dot-y circle { fill: #ffee00; stroke: #000; }

.navrow { height: 18px; display: flex; align-items: center; flex: none; padding-left: 1px; }
.sb { height: 17px; flex: none; display: flex; align-items: center; justify-content: center; background: #ece9d8; border: 1px solid; border-color: #fff #85837a #85837a #fff; }
.sb svg { width: 15px; height: 13px; }
.sb-blue { border-left: 1px solid #1050d0; }
.w-17 { width: 17px; } .w-23 { width: 23px; }
.ml1 { margin-left: 1px; } .ml2 { margin-left: 2px; }
.combo { height: 17px; background: #fff; display: flex; align-items: center; padding-left: 3px; font-size: 11.5px; color: #222; flex: none; white-space: nowrap; }
.w-66 { width: 66px; } .w-64 { width: 64px; }
.tri-l, .tri-r { display: block; width: 0; height: 0; border-style: solid; border-color: transparent; border-width: 5px; }
.tri-l { border-left: 0; border-right-color: #111; }
.tri-r { border-right: 0; border-left-color: #111; }
.track { flex: none; width: 859px; height: 17px; background: repeating-conic-gradient(#fff 0 25%, #ece9d8 0 50%) 0 0 / 2px 2px; padding-left: 24px; }
.thumb { display: block; width: 16px; height: 17px; background: #ece9d8; border: 1px solid; border-color: #fff #85837a #85837a #fff; }
.nav-num { width: 58px; text-align: center; font-size: 12px; flex: none; }

.controls { height: 95px; flex: none; display: flex; flex-direction: column; padding-top: 1px; }
.splitter { margin-left: 385px; width: 510px; height: 6px; display: flex; align-items: center; gap: 3px; padding: 0 2px; border: 1px solid #b8b5a6; border-bottom-color: #85837a; background: #ece9d8; }
.spl-tri { width: 0; height: 0; border: 4px solid transparent; border-top: 4px solid #1a50d0; border-bottom: 0; }
.spl-dots { flex: 1; height: 1px; background: repeating-linear-gradient(90deg, #1a50d0 0 1px, transparent 1px 3px); }
.groups { display: flex; gap: 6px; margin: 8px 0 0 258px; }
.group { height: 78px; border: 1px solid #c9c6b6; border-radius: 5px; flex: none; }
.gt { margin: -6px 0 0 5px; padding: 0; width: max-content; font-size: 12px; font-weight: 700; background: #ece9d8; line-height: 14px; }
.gt-navy { color: #0a0a70; } .gt-gray { color: #aca899; } .gt-blue { color: #1040d0; }
.g-chan { width: 371px; display: flex; }
.g-freq { width: 104px; }
.g-sync { width: 134px; }
.g-ctrl { width: 134px; }

.chan-left { width: 271px; padding: 0 0 0 4px; flex: none; }
.chbtns { display: flex; gap: 1px; margin-top: -5px; height: 22px; }
.ch { width: 33px; height: 21px; border: 1px solid #12386a; border-radius: 2px; background: linear-gradient(#d8d8d8, #a8a8a8); color: #8a8a8a; font-size: 12px; display: flex; align-items: center; justify-content: center; }
.ch-1 { width: 56px; background: linear-gradient(#40ff40, #00c800); color: #000; font-weight: 700; margin-right: 1px; }
.ch-4 { background: linear-gradient(#60a0ff, #1040f0); color: #000; font-weight: 400; }
.sensor-row { display: flex; margin: 4px 0 0 2px; height: 23px; gap: 3px; }
.sensor { width: 241px; height: 23px; border: 1px solid #14e014; background: #fff; display: flex; align-items: center; padding: 0 1px 0 3px; }
.sensor-tx { font-size: 13.5px; letter-spacing: .3px; color: #111; white-space: nowrap; }
.sensor-btn { margin-left: auto; width: 17px; height: 19px; background: #ece9d8; border: 1px solid; border-color: #fff #85837a #85837a #fff; text-align: center; font-weight: 700; line-height: 12px; }
.sensor-ic { width: 20px; height: 20px; }
.chan-tools { display: flex; align-items: center; margin: 1px 0 0 3px; height: 29px; }
.ct { width: 30px; height: 29px; display: flex; align-items: center; justify-content: center; }
.ct svg { width: 28px; height: 28px; }
.ct-on { background: repeating-conic-gradient(#fff 0 25%, #ece9d8 0 50%) 0 0 / 2px 2px; border: 1px solid; border-color: #aca899 #fff #fff #aca899; }
.ct-plain { margin-left: 4px; width: 26px; }
.ct-lines { margin-left: 4px; background: #ece9d8; }
.fx { margin-left: 6px; font: italic 700 22px "Liberation Serif", serif; color: #111; }
.fx i { font-style: italic; }
.fx sub { font-size: 12px; }

.knob { flex: none; }
.knob-v { width: 96px; height: 66px; margin-top: 10px; }
.knob-f { width: 102px; height: 71px; margin-top: -3px; }
.kt { stroke: #b8b5a6; }
.kb { stroke: #111; fill: none; }
.kr { fill: #ece9d8; stroke: url(#kg); stroke-width: 2.4; }
.kmark { fill: #1030e0; }
.kc { font-size: 14px; fill: #1a1a3a; text-anchor: middle; }
.kl { font-size: 10px; fill: #333; text-anchor: middle; }

.sync-grid { display: grid; grid-template-columns: 30px 30px 30px 30px; grid-auto-rows: 28px; column-gap: 0; padding: 0 0 0 6px; margin-top: 3px; row-gap: 3px; }
.sy { width: 26px; height: 24px; justify-self: center; }
.sy-on { background: repeating-conic-gradient(#fff 0 25%, #ece9d8 0 50%) 0 0 / 2px 2px; }
.combo-dis { grid-column: 1 / 3; width: 47px; height: 22px; margin: 3px 0 0 1px; border: 1px solid #b8b5a6; display: flex; align-items: center; padding-left: 5px; font-size: 13px; color: #444; }
.sy-a { margin-top: 3px; }

.ctrl-grid { display: grid; grid-template-columns: 40px 40px 40px; column-gap: 3px; row-gap: 1px; grid-auto-rows: 32px; padding: 0 0 0 3px; margin-top: 2px; }
.cb { border: 1px solid #bbb8a9; border-radius: 2px; background: linear-gradient(#f8f7f0, #e4e1d0); display: flex; align-items: center; justify-content: center; gap: 2px; height: 32px; }
.cb svg { width: 36px; height: 26px; }
.cb-pause { background: #ece9d8; }
.pz { display: block; width: 5px; height: 17px; background: #a8a8a8; border: 1px solid #85837a; border-radius: 1px; margin: 0 1px; }
.cb-navy { border: 2px solid #12386a; }
.cb-green { border: 2px solid #14e014; background: #f4f6ff; }
.cb-green svg { width: 38px; height: 28px; }
.cb-start { grid-column: 1 / 3; width: 83px; justify-content: flex-start; padding-left: 8px; }
.cb-start .play { width: 12px; height: 20px; }
.cb-start b { margin-left: 17px; font-size: 12px; color: #111; }
.fps { align-self: end; justify-self: center; margin: 0 0 2px 4px; font-size: 13px; color: #0a7a0a; letter-spacing: .2px; line-height: 15px; }

.statusbar { height: 19px; flex: none; border-top: 2px solid #96938a; display: flex; padding-top: 1px; gap: 2px; font-size: 11px; color: #222; }
.st { height: 16px; border: 1px solid; border-color: #aca899 #fff #fff #aca899; display: flex; align-items: center; padding-left: 3px; white-space: nowrap; }
.st-main { width: 191px; }
.st-mid { width: 1036px; }
.st-ver { width: 47px; padding-left: 4px; font-size: 12px; }

.taskbar { margin-top: 0; height: 4px; display: flex; }
.tk-start { width: 98px; background: #3c8a3c; }
.tk-mid { width: 985px; background: #2f6dd0; }
.tk-tray { flex: 1; background: #129ee6; }
```
